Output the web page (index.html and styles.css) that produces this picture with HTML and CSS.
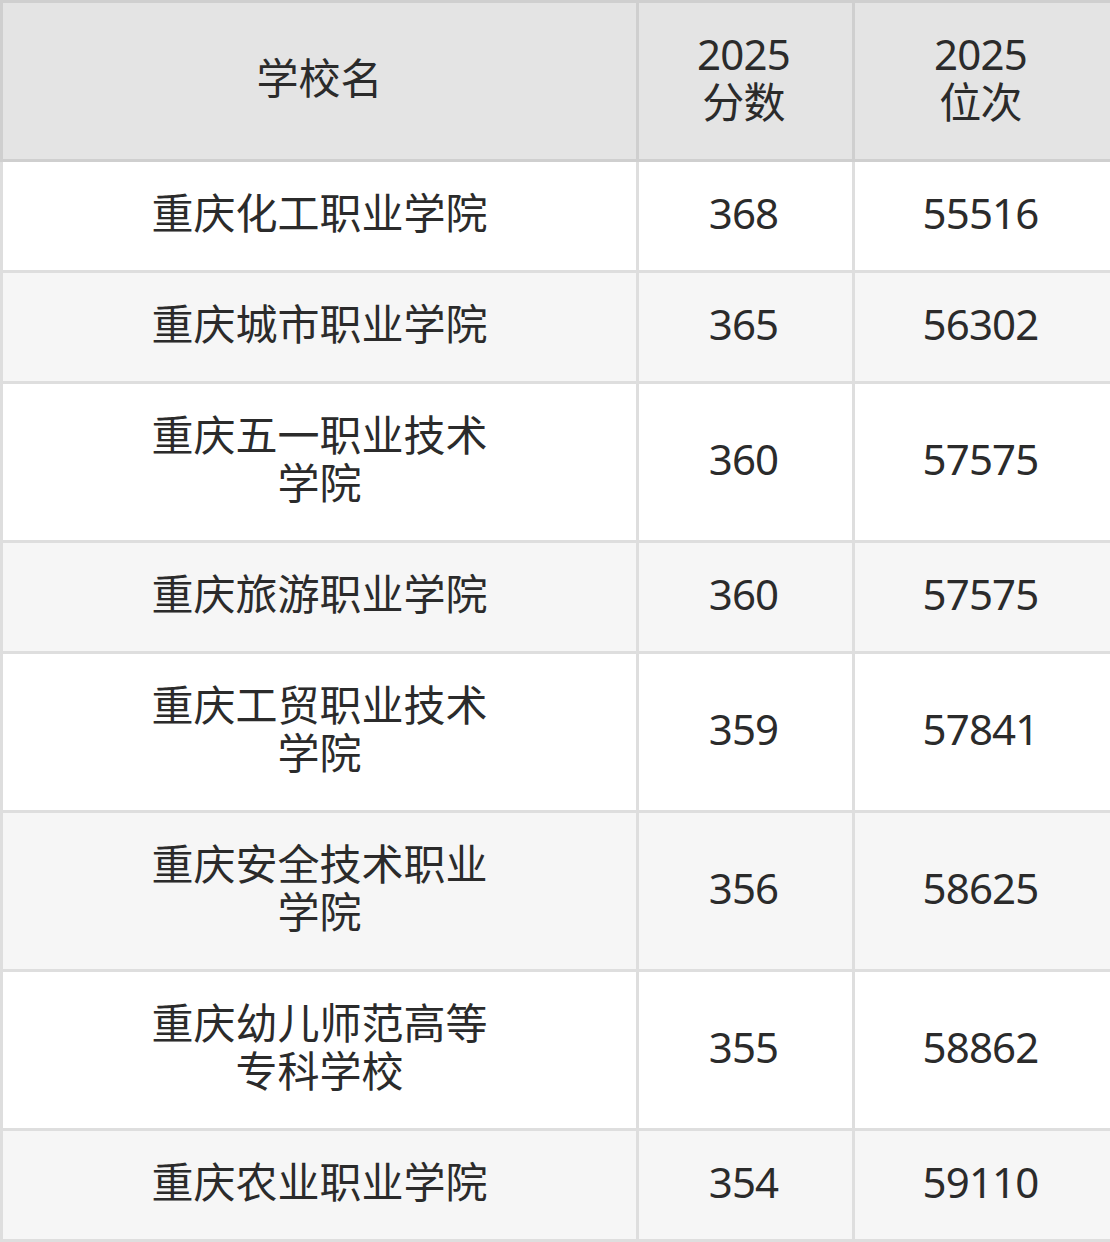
FILE: index.html
```html
<!DOCTYPE html>
<html lang="zh">
<head>
<meta charset="utf-8">
<link rel="stylesheet" href="styles.css">
</head>
<body>
<table class="score-table">
  <colgroup>
    <col class="col-name">
    <col class="col-score">
    <col class="col-rank">
  </colgroup>
  <thead>
    <tr>
      <th class="name">学校名</th>
      <th class="num">2025<br>分数</th>
      <th class="num">2025<br>位次</th>
    </tr>
  </thead>
  <tbody>
    <tr><td class="name">重庆化工职业学院</td><td class="num">368</td><td class="num">55516</td></tr>
    <tr><td class="name">重庆城市职业学院</td><td class="num">365</td><td class="num">56302</td></tr>
    <tr><td class="name">重庆五一职业技术学院</td><td class="num">360</td><td class="num">57575</td></tr>
    <tr><td class="name">重庆旅游职业学院</td><td class="num">360</td><td class="num">57575</td></tr>
    <tr><td class="name">重庆工贸职业技术学院</td><td class="num">359</td><td class="num">57841</td></tr>
    <tr><td class="name">重庆安全技术职业学院</td><td class="num">356</td><td class="num">58625</td></tr>
    <tr><td class="name">重庆幼儿师范高等专科学校</td><td class="num">355</td><td class="num">58862</td></tr>
    <tr><td class="name">重庆农业职业学院</td><td class="num">354</td><td class="num">59110</td></tr>
  </tbody>
</table>
</body>
</html>
```
FILE: styles.css
```css
html, body {
  margin: 0;
  padding: 0;
  background: #ffffff;
}

.score-table {
  width: 1110px;
  border-collapse: collapse;
  table-layout: fixed;
  font-family: "Noto Sans", "Noto Sans CJK SC", sans-serif;
  font-size: 42px;
  line-height: 48px;
  color: #2b2b2b;
}

.col-name { width: 636px; }
.col-score { width: 216px; }
.col-rank { width: 258px; }

.score-table th,
.score-table td {
  text-align: center;
  vertical-align: middle;
  padding: 27px 0 33px;
  font-weight: normal;
}

.score-table th {
  background: #e4e4e4;
  border: 3px solid #cfcfcf;
}

.score-table td {
  border: 3px solid #dedede;
}

.score-table .name {
  padding-left: 140px;
  padding-right: 140px;
}

.score-table .num {
  letter-spacing: -0.8px;
  padding-right: 4px;
}

.score-table tbody tr:nth-child(even) td {
  background: #f6f6f6;
}
```
